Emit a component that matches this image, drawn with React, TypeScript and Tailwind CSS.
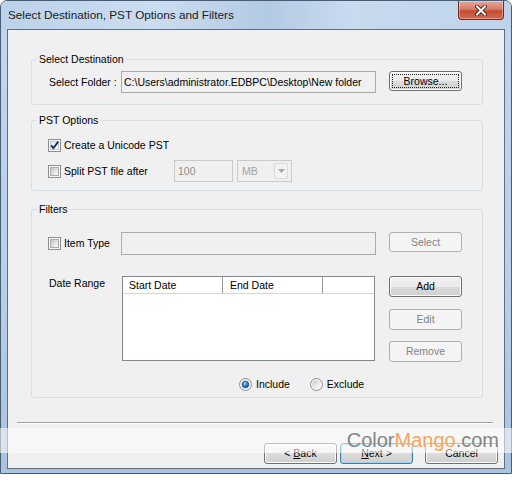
import React from "react";

function CheckBox({ checked }: { checked?: boolean }) {
  return (
    <svg width="13" height="13" viewBox="0 0 13 13" className="shrink-0 block">
      <defs>
        <linearGradient id="cbUn" x1="0" y1="0" x2="1" y2="1">
          <stop offset="0" stopColor="#b9bdc2" />
          <stop offset="0.6" stopColor="#e6e7e8" />
          <stop offset="1" stopColor="#fbfbfb" />
        </linearGradient>
        <linearGradient id="cbCh" x1="0" y1="0" x2="1" y2="1">
          <stop offset="0" stopColor="#dfe6ee" />
          <stop offset="1" stopColor="#ffffff" />
        </linearGradient>
      </defs>
      <rect x="0.5" y="0.5" width="12" height="12" fill="#f6f6f6" stroke="#8e8f8f" />
      <rect x="2.5" y="2.5" width="8" height="8" fill={checked ? "url(#cbCh)" : "url(#cbUn)"} stroke={checked ? "#c3c9d1" : "#a9adb2"} strokeWidth="1" />
      {checked && (
        <path d="M3.2 6.4 L5.4 9.2 L10.2 2.6" fill="none" stroke="#1d3160" strokeWidth="1.9" strokeLinejoin="round" />
      )}
    </svg>
  );
}

function Radio({ checked }: { checked?: boolean }) {
  return (
    <svg width="13" height="13" viewBox="0 0 13 13" className="shrink-0 block">
      <defs>
        <linearGradient id="rbBg" x1="0" y1="0" x2="1" y2="1">
          <stop offset="0" stopColor="#c4c7cb" />
          <stop offset="0.6" stopColor="#ececec" />
          <stop offset="1" stopColor="#fdfdfd" />
        </linearGradient>
        <radialGradient id="rbDot" cx="0.4" cy="0.35" r="0.7">
          <stop offset="0" stopColor="#9fd2f7" />
          <stop offset="0.55" stopColor="#2e7dc4" />
          <stop offset="1" stopColor="#13467f" />
        </radialGradient>
      </defs>
      <circle cx="6.5" cy="6.5" r="6" fill="#f4f4f4" stroke="#8e8f8f" />
      <circle cx="6.5" cy="6.5" r="4.3" fill="url(#rbBg)" />
      {checked && <circle cx="6.5" cy="6.5" r="3.3" fill="url(#rbDot)" stroke="#1f4e7c" strokeWidth="0.7" />}
    </svg>
  );
}

function Btn({
  children,
  kind = "normal",
  h = "h-[21px]",
}: {
  children: React.ReactNode;
  kind?: "normal" | "disabled" | "default" | "focus";
  h?: string;
}) {
  let cls = "";
  if (kind === "disabled") {
    cls = "border-[#adb2b5] bg-[#f4f4f4] text-[#838383]";
  } else if (kind === "default") {
    cls =
      "border-[#3c7fb1] bg-[linear-gradient(#f2f2f2_0%,#ebebeb_50%,#dddddd_50%,#cfcfcf_100%)] shadow-[inset_0_0_0_1px_#8fd8fb] text-black";
  } else {
    cls =
      "border-[#707070] bg-[linear-gradient(#f2f2f2_0%,#ebebeb_50%,#dddddd_50%,#cfcfcf_100%)] shadow-[inset_0_0_0_1px_#fcfcfc] text-black";
  }
  return (
    <div className={`w-[73px] ${h} shrink-0 rounded-[3px] border flex items-stretch p-[2px] ${cls}`}>
      <div
        className={`flex-1 flex items-center justify-center ${
          kind === "focus" ? "border border-dotted border-[#222]" : "border border-transparent"
        }`}
      >
        {children}
      </div>
    </div>
  );
}

export default function App() {
  return (
    <div className="w-[512px] h-[480px] bg-white relative overflow-hidden font-['Liberation_Sans',Arial,sans-serif] text-[10.5px] leading-[13px] text-black">
      <div className="w-[512px] h-[474px] border border-[#4a5c72] rounded-t-[7px] bg-[linear-gradient(to_bottom,#c2d6ec,#b9cfe8_60%,#a9c2de)] flex flex-col">
        {/* Title bar */}
        <div className="h-[28px] shrink-0 flex items-start pl-[7px] pr-[7px] rounded-t-[6px] bg-[linear-gradient(to_right,#bcd2ea,#cbddf0_30%,#b3cae4_52%,#c8daee_68%,#bed3ea)]">
          <div className="pt-[6px] text-[11.75px] leading-[16px] text-[#1a1a1a]">
            Select Destination, PST Options and Filters
          </div>
          <div className="ml-auto w-[46px] h-[19px] rounded-b-[4px] border border-t-0 border-[#6a2b24] bg-[linear-gradient(#e9a595_0%,#d97c68_45%,#c64a35_55%,#d26a50_100%)] shadow-[inset_0_0_0_1px_rgba(255,255,255,0.35)] flex items-center justify-center">
            <svg width="12" height="11" viewBox="0 0 12 11">
              <path d="M2 1.5 L10 9.5 M10 1.5 L2 9.5" stroke="#4a1510" strokeWidth="3.8" strokeLinecap="square" />
              <path d="M2 1.5 L10 9.5 M10 1.5 L2 9.5" stroke="#ffffff" strokeWidth="2" strokeLinecap="square" />
            </svg>
          </div>
        </div>

        {/* Client area */}
        <div className="mx-[6px] h-[440px] shrink-0 border border-[#5d6f86] bg-[#f0f0f0] flex flex-col">
          {/* Select Destination */}
          <fieldset className="ml-[23px] mr-[21px] mt-[23px] border border-[#d5dfe5] rounded-[3px] p-0 pb-[11px]">
            <legend className="ml-[5px] px-[2px] leading-[13px]">Select Destination</legend>
            <div className="mt-[5px] h-[22px] flex items-start pl-[17px]">
              <div className="w-[72px] h-[22px] flex items-center">Select Folder :</div>
              <div className="w-[255px] h-[22px] border border-[#a9a9a9] bg-[#f0f0f0] pl-[2px] flex items-center whitespace-nowrap overflow-hidden">
                C:\Users\administrator.EDBPC\Desktop\New folder
              </div>
              <div className="ml-[13px]">
                <Btn kind="focus" h="h-[20px]">Browse...</Btn>
              </div>
            </div>
          </fieldset>

          {/* PST Options */}
          <fieldset className="ml-[23px] mr-[21px] mt-[9px] border border-[#d5dfe5] rounded-[3px] p-0 pb-[8px]">
            <legend className="ml-[5px] px-[2px] leading-[13px]">PST Options</legend>
            <div className="mt-[10px] h-[16px] flex items-center pl-[16px]">
              <CheckBox checked />
              <span className="ml-[3px]">Create a Unicode PST</span>
            </div>
            <div className="mt-[7px] h-[22px] flex items-center pl-[16px]">
              <div className="w-[126px] flex items-center">
                <CheckBox />
                <span className="ml-[3px]">Split PST file after</span>
              </div>
              <div className="w-[59px] h-[22px] border border-[#cacaca] bg-[#f0f0f0] pl-[3px] flex items-center text-[#8d8d8d]">
                100
              </div>
              <div className="ml-[4px] w-[55px] h-[22px] border border-[#cacaca] bg-[#f0f0f0] flex items-center">
                <span className="flex-1 pl-[4px] text-[#a3a3a3]">MB</span>
                <div className="w-[14px] h-[16px] mr-[3px] border border-[#dcdcdc] rounded-[2px] flex items-center justify-center bg-[#f3f3f3]">
                  <svg width="7" height="4" viewBox="0 0 7 4">
                    <path d="M0 0 L7 0 L3.5 4 Z" fill="#a8a8a8" />
                  </svg>
                </div>
              </div>
            </div>
          </fieldset>

          {/* Filters */}
          <fieldset className="ml-[23px] mr-[21px] mt-[12px] border border-[#d5dfe5] rounded-[3px] p-0 pb-[6px]">
            <legend className="ml-[5px] px-[2px] leading-[13px]">Filters</legend>
            <div className="mt-[16px] flex items-start pl-[16px]">
              <div className="w-[73px] h-[23px] flex items-center">
                <CheckBox />
                <span className="ml-[3px]">Item Type</span>
              </div>
              <div className="w-[255px] h-[23px] border border-[#acacac] bg-[#f0f0f0]" />
              <div className="ml-[13px]">
                <Btn kind="disabled" h="h-[20px]">Select</Btn>
              </div>
            </div>

            <div className="mt-[21px] flex items-start pl-[17px]">
              <div className="w-[73px] pt-[1px]">Date Range</div>
              <div className="w-[253px] h-[85px] border border-[#828790] bg-white flex flex-col">
                <div className="h-[17px] flex border-b border-[#d5d5d5]">
                  <div className="w-[100px] border-r border-[#9a9a9a] pl-[6px] flex items-center">Start Date</div>
                  <div className="w-[100px] border-r border-[#9a9a9a] pl-[7px] flex items-center">End Date</div>
                  <div className="flex-1" />
                </div>
              </div>
              <div className="ml-[14px] flex flex-col">
                <Btn>Add</Btn>
                <div className="mt-[12px]">
                  <Btn kind="disabled">Edit</Btn>
                </div>
                <div className="mt-[11px]">
                  <Btn kind="disabled">Remove</Btn>
                </div>
              </div>
            </div>

            <div className="mt-[15px] h-[14px] flex items-center pl-[207px]">
              <Radio checked />
              <span className="ml-[4px] mr-[20px]">Include</span>
              <Radio />
              <span className="ml-[4px]">Exclude</span>
            </div>
          </fieldset>

          {/* Separator */}
          <div className="ml-[9px] mr-[11px] mt-[24px] h-[2px] border-t border-[#a0a0a0] border-b border-b-white" />

          {/* Bottom buttons */}
          <div className="mt-[19px] flex justify-end pr-[6px]">
            <Btn>
              <span>
                &lt; <span className="underline">B</span>ack
              </span>
            </Btn>
            <div className="ml-[3px]">
              <Btn kind="default">
                <span>
                  <span className="underline">N</span>ext &gt;
                </span>
              </Btn>
            </div>
            <div className="ml-[12px]">
              <Btn>Cancel</Btn>
            </div>
          </div>
        </div>
      </div>

      {/* Watermark overlay */}
      <div className="absolute left-0 top-[428px] w-[512px] h-[25px] bg-white/55 flex items-center justify-end pr-[13px] text-[20px] leading-[25px] font-['Liberation_Sans',Arial,sans-serif]">
        <span className="text-[#858585]">Color</span>
        <span className="text-[#f6a461]">Mango</span>
        <span className="text-[#858585]">.com</span>
      </div>
    </div>
  );
}
